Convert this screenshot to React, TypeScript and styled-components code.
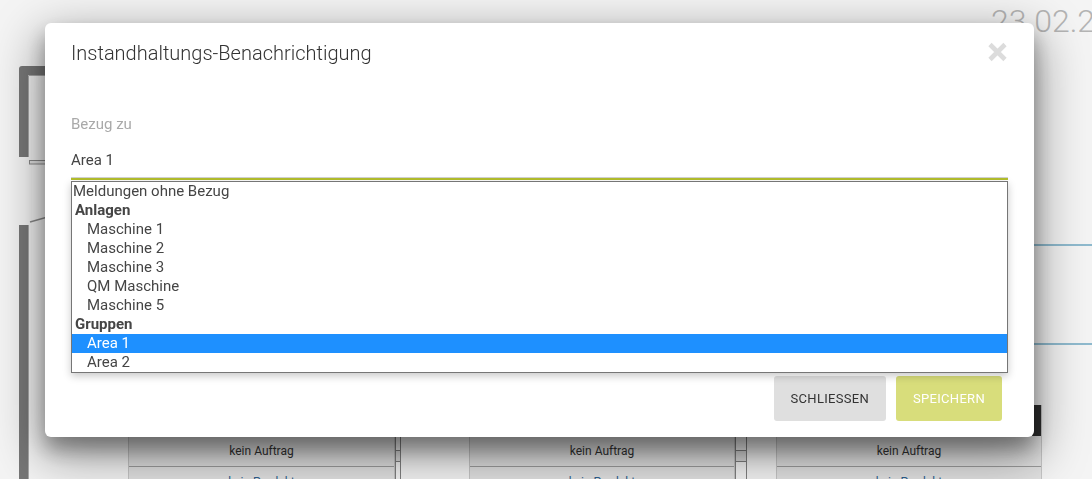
import React from "react";
import styled, { createGlobalStyle } from "styled-components";

const GlobalStyle = createGlobalStyle`
  *, *::before, *::after { box-sizing: border-box; }
  html, body { margin: 0; padding: 0; width: 100%; height: 100%; overflow: hidden; }
  body {
    font-family: Roboto, "Noto Sans", "Liberation Sans", sans-serif;
    background: #f4f4f4;
  }
`;

/* ---------- dashboard behind the dialog ---------- */

const Page = styled.div`
  position: relative;
  width: 100vw;
  height: 100vh;
  overflow: hidden;
  display: grid;
  grid-template-columns: 60px 1fr;
  grid-template-rows: 45px 1fr;
  background: #f4f4f4;
`;

const Rail = styled.div`
  grid-column: 1;
  grid-row: 1 / span 2;
`;

const Header = styled.header`
  grid-column: 2;
  grid-row: 1;
  display: flex;
  align-items: flex-start;
  padding: 2px 0 0 931px;
  white-space: nowrap;
`;

const DateText = styled.div`
  font-weight: 300;
  font-size: 32px;
  line-height: 38px;
  color: #b4b4b4;
`;

const Floor = styled.main`
  grid-column: 2;
  grid-row: 2;
  display: flex;
  flex-direction: column;
  min-width: 0;
`;

const Lane = styled.div`
  margin-top: 199px;
  height: 101px;
  border-top: 2px solid #8fbace;
  border-bottom: 2px solid #8fbace;
`;

const CardsRow = styled.div`
  margin-top: 60px;
  padding-left: 68px;
  display: grid;
  grid-template-columns: 267px 74px 266px 41px 266px;
  align-items: stretch;
`;

const Card = styled.section`
  display: flex;
  flex-direction: column;
  border-left: 1px solid #c6c6c6;
  border-right: 1px solid #c6c6c6;
  height: 120px;
`;

const CardHead = styled.div`
  height: 31px;
  background: #2f2f2f;
`;

const Slot = styled.div<{ $tone?: "link" }>`
  height: 31px;
  display: flex;
  align-items: center;
  justify-content: center;
  font-size: 12px;
  color: ${(p) => (p.$tone === "link" ? "#2d5f8f" : "#333")};
  background: #e2e2e2;
  border-bottom: 1px solid #9c9c9c;
`;

const Link = styled.div<{ $w: number }>`
  width: ${(p) => p.$w}px;
  justify-self: start;
  border-left: 1px solid #808080;
  border-right: 1px solid #808080;
  display: flex;
  flex-direction: column;
`;

const Joint = styled.div`
  margin-top: 45px;
  height: 12px;
  border-top: 1px solid #808080;
  border-bottom: 1px solid #808080;
  background: #dcdcdc;
`;

/* ---------- dialog ---------- */

const Dialog = styled.div`
  position: fixed;
  top: 23px;
  left: 45px;
  width: 989px;
  height: 414px;
  background: #fff;
  border-radius: 6px;
  box-shadow: 0 12px 20px rgba(0, 0, 0, 0.32), 0 16px 50px 4px rgba(0, 0, 0, 0.4);
  display: flex;
  flex-direction: column;
  padding: 18px 26px 16px;
  z-index: 10;
`;

const TitleRow = styled.div`
  display: flex;
  justify-content: space-between;
  align-items: flex-start;
`;

const Title = styled.h4`
  margin: 0;
  font-weight: 300;
  font-size: 20px;
  line-height: 24px;
  color: #333;
`;

const CloseButton = styled.button`
  width: 21px;
  height: 22px;
  padding: 0;
  border: 0;
  background: none;
  cursor: pointer;
  display: block;
`;

const Field = styled.div`
  position: relative;
  margin-top: 50px;
`;

const Label = styled.label`
  display: block;
  font-size: 15px;
  line-height: 18px;
  color: #a9a9a9;
`;

const Value = styled.div`
  margin-top: 18px;
  font-size: 15px;
  line-height: 18px;
  color: #444;
  padding-bottom: 8px;
  border-bottom: 1px solid #d2d2d2;
  box-shadow: 0 2px 0 #b4bf2c;
`;

const ListBox = styled.ul`
  position: absolute;
  top: calc(100% + 3px);
  left: 0;
  right: 0;
  margin: 0;
  padding: 0;
  list-style: none;
  background: #fff;
  border: 1px solid #767676;
  box-shadow: 0 3px 8px rgba(0, 0, 0, 0.22);
  font-size: 15px;
  color: #454545;
  z-index: 2;
`;

const Row = styled.li<{ $kind: "plain" | "group" | "child"; $selected?: boolean }>`
  height: 19px;
  line-height: 19px;
  white-space: nowrap;
  padding-left: ${(p) => (p.$kind === "plain" ? 1 : p.$kind === "group" ? 3 : 15)}px;
  font-weight: ${(p) => (p.$kind === "group" ? 700 : 400)};
  background: ${(p) => (p.$selected ? "#1e90ff" : "transparent")};
  color: ${(p) => (p.$selected ? "#fff" : "inherit")};
`;

const Footer = styled.div`
  margin-top: auto;
  display: flex;
  justify-content: flex-end;
  gap: 10px;
  padding-right: 6px;
`;

const Button = styled.button<{ $primary?: boolean }>`
  height: 45px;
  padding: 0 17px;
  border: 0;
  border-radius: 3px;
  font-family: inherit;
  font-size: 13px;
  font-weight: 400;
  letter-spacing: 0.3px;
  text-transform: uppercase;
  background: ${(p) => (p.$primary ? "#d8dd7b" : "#dfdfdf")};
  color: ${(p) => (p.$primary ? "#fff" : "#333")};
  cursor: pointer;
`;

type Item = { label: string; kind: "plain" | "group" | "child"; selected?: boolean };

const items: Item[] = [
  { label: "Meldungen ohne Bezug", kind: "plain" },
  { label: "Anlagen", kind: "group" },
  { label: "Maschine 1", kind: "child" },
  { label: "Maschine 2", kind: "child" },
  { label: "Maschine 3", kind: "child" },
  { label: "QM Maschine", kind: "child" },
  { label: "Maschine 5", kind: "child" },
  { label: "Gruppen", kind: "group" },
  { label: "Area 1", kind: "child", selected: true },
  { label: "Area 2", kind: "child" },
];

function HallWall() {
  return (
    <svg width="60" height="479" viewBox="0 0 60 479" aria-hidden="true">
      <path d="M19 69 Q19 66 22 66 H60 V75 H28 V157 H19 Z" fill="#777" />
      <path d="M28.5 157 V75.5 H60" fill="none" stroke="#a8a8a8" strokeWidth="1" />
      <rect x="29.5" y="160.5" width="31" height="3.5" fill="#e4e4e4" stroke="#8a8a8a" strokeWidth="1" />
      <line x1="30" y1="222" x2="60" y2="213.5" stroke="#8a8a8a" strokeWidth="1.4" />
      <rect x="19" y="225" width="9" height="260" fill="#777" />
      <line x1="28.5" y1="225" x2="28.5" y2="479" stroke="#a8a8a8" strokeWidth="1" />
    </svg>
  );
}

function MachineCard() {
  return (
    <Card>
      <CardHead />
      <Slot>kein Auftrag</Slot>
      <Slot $tone="link">kein Produkt</Slot>
    </Card>
  );
}

export default function App() {
  return (
    <>
      <GlobalStyle />
      <Page>
        <Rail>
          <HallWall />
        </Rail>
        <Header>
          <DateText>23.02.2023</DateText>
        </Header>
        <Floor>
          <Lane />
          <CardsRow>
            <MachineCard />
            <Link $w={6}>
              <Joint />
            </Link>
            <MachineCard />
            <Link $w={12}>
              <Joint />
            </Link>
            <MachineCard />
          </CardsRow>
        </Floor>

        <Dialog role="dialog" aria-modal="true">
          <TitleRow>
            <Title>Instandhaltungs-Benachrichtigung</Title>
            <CloseButton aria-label="close">
              <svg width="21" height="22" viewBox="0 0 21 22">
                <path d="M3 3.5 L18 18.5 M18 3.5 L3 18.5" stroke="#dcdcdc" strokeWidth="4.6" strokeLinecap="butt" />
              </svg>
            </CloseButton>
          </TitleRow>

          <Field>
            <Label>Bezug zu</Label>
            <Value>Area 1</Value>
            <ListBox role="listbox">
              {items.map((it) => (
                <Row key={it.label} $kind={it.kind} $selected={it.selected}>
                  {it.label}
                </Row>
              ))}
            </ListBox>
          </Field>

          <Footer>
            <Button>Schliessen</Button>
            <Button $primary>Speichern</Button>
          </Footer>
        </Dialog>
      </Page>
    </>
  );
}
